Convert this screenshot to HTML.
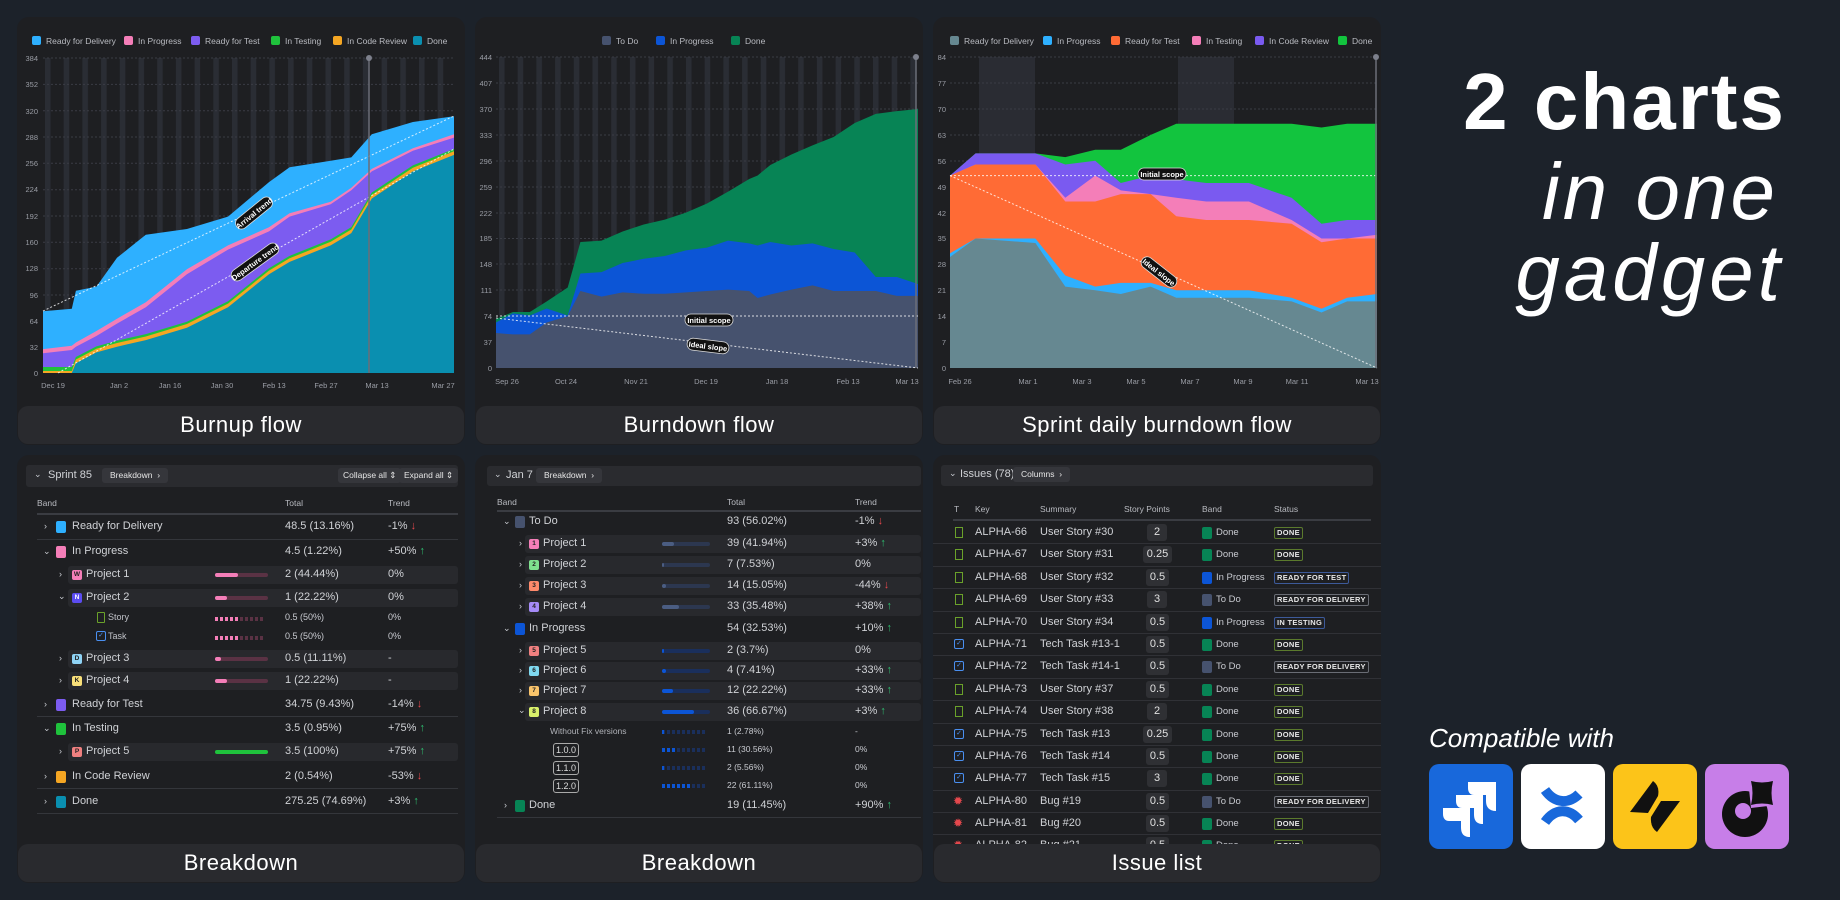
<!DOCTYPE html>
<html><head><meta charset="utf-8"><style>
*{margin:0;padding:0;box-sizing:border-box}
body{width:1840px;height:900px;background:#1c222a;font-family:"Liberation Sans",sans-serif;color:#c9cbd1;position:relative;overflow:hidden}
.panel{position:absolute;background:#1e1f22;border-radius:12px}
.cap{position:absolute;background:#292a2e;border-radius:10px;color:#fff;font-size:22px;letter-spacing:.5px;text-align:center;line-height:38px;height:38px}
.a{position:absolute;white-space:nowrap}
.hb{position:absolute;background:#2a2b2f;border-radius:3px}
.btn{position:absolute;background:#35363b;border-radius:3px;color:#e6e6e6;font-size:8.5px;line-height:15px;height:15px;padding:0 8px}
.t{font-size:11px;color:#d0d2d6}
.h{font-size:8.5px;color:#b9bbc1}
.sw{position:absolute;width:10px;height:12px;border-radius:2px}
.pi{position:absolute;width:10px;height:10px;border-radius:2px;font-size:6.5px;color:#222;text-align:center;line-height:10px;font-weight:bold}
.rb{position:absolute;background:#28292d;border-radius:3px;height:18px}
.ln{position:absolute;height:1px;background:#34363b}
.bar{position:absolute;height:4px;border-radius:2px}
.up{color:#2fbf71}.dn{color:#e5484d}
.chev{position:absolute;font-size:9px;color:#c9cbd1}
.sp{position:absolute;background:#2f3034;border-radius:3px;font-size:11px;color:#e0e0e0;text-align:center;height:17px;line-height:17px}
.st{position:absolute;font-size:7.5px;font-weight:bold;color:#e8e8e8;border:1px solid #6a6d75;border-radius:2px;padding:0 2px;height:12px;line-height:10px;letter-spacing:.3px}
.dot{position:absolute;height:4px;width:50px}
</style></head><body>

<div class="panel" style="left:17px;top:17px;width:448px;height:428px"></div>
<div class="panel" style="left:475px;top:17px;width:448px;height:428px"></div>
<div class="panel" style="left:933px;top:17px;width:448px;height:428px"></div>
<div class="panel" style="left:17px;top:455px;width:448px;height:428px"></div>
<div class="panel" style="left:475px;top:455px;width:448px;height:428px"></div>
<div class="panel" style="left:933px;top:455px;width:448px;height:428px"></div>

<svg width="1840" height="900" style="position:absolute;left:0;top:0" font-family="Liberation Sans, sans-serif">
<defs>
<pattern id="st1" x="45" y="0" width="18.7" height="10" patternUnits="userSpaceOnUse"><rect width="5.5" height="10" fill="#2a2d34"/></pattern>
<pattern id="st2" x="499" y="0" width="18.7" height="10" patternUnits="userSpaceOnUse"><rect width="5.5" height="10" fill="#2a2d34"/></pattern>
</defs>
<g font-size="8.5" fill="#b9bbc1">
<rect x="32" y="36" width="9" height="9" rx="2" fill="#2eb0ff"/><text x="46" y="44">Ready for Delivery</text>
<rect x="124" y="36" width="9" height="9" rx="2" fill="#f47eb8"/><text x="138" y="44">In Progress</text>
<rect x="191" y="36" width="9" height="9" rx="2" fill="#7c5cf0"/><text x="205" y="44">Ready for Test</text>
<rect x="271" y="36" width="9" height="9" rx="2" fill="#1fc23c"/><text x="285" y="44">In Testing</text>
<rect x="333" y="36" width="9" height="9" rx="2" fill="#f5a623"/><text x="347" y="44">In Code Review</text>
<rect x="413" y="36" width="9" height="9" rx="2" fill="#0a8fb0"/><text x="427" y="44">Done</text>

<rect x="602" y="36" width="9" height="9" rx="2" fill="#46526e"/><text x="616" y="44">To Do</text>
<rect x="656" y="36" width="9" height="9" rx="2" fill="#0c55d6"/><text x="670" y="44">In Progress</text>
<rect x="731" y="36" width="9" height="9" rx="2" fill="#078455"/><text x="745" y="44">Done</text>

<rect x="950" y="36" width="9" height="9" rx="2" fill="#668891"/><text x="964" y="44">Ready for Delivery</text>
<rect x="1043" y="36" width="9" height="9" rx="2" fill="#2eb0ff"/><text x="1057" y="44">In Progress</text>
<rect x="1111" y="36" width="9" height="9" rx="2" fill="#ff6b35"/><text x="1125" y="44">Ready for Test</text>
<rect x="1192" y="36" width="9" height="9" rx="2" fill="#f47eb8"/><text x="1206" y="44">In Testing</text>
<rect x="1255" y="36" width="9" height="9" rx="2" fill="#7a5af0"/><text x="1269" y="44">In Code Review</text>
<rect x="1338" y="36" width="9" height="9" rx="2" fill="#12c43e"/><text x="1352" y="44">Done</text>
</g>

<!-- Chart 1 -->
<rect x="43" y="58" width="411" height="315" fill="url(#st1)"/>
<g stroke="#3a3c44" stroke-dasharray="2 2" stroke-width="1">
<line x1="43" x2="454" y1="58" y2="58"/><line x1="43" x2="454" y1="84.4" y2="84.4"/><line x1="43" x2="454" y1="110.7" y2="110.7"/><line x1="43" x2="454" y1="137" y2="137"/><line x1="43" x2="454" y1="163.3" y2="163.3"/><line x1="43" x2="454" y1="189.7" y2="189.7"/><line x1="43" x2="454" y1="216" y2="216"/><line x1="43" x2="454" y1="242.3" y2="242.3"/><line x1="43" x2="454" y1="268.7" y2="268.7"/><line x1="43" x2="454" y1="295" y2="295"/><line x1="43" x2="454" y1="321.3" y2="321.3"/><line x1="43" x2="454" y1="347.6" y2="347.6"/>
</g>
<polygon fill="#2eb0ff" points="43,311.3 71.8,308.8 75.9,290.7 96.4,286.6 117,257.8 145.8,234.7 186.9,229 228,216.6 269,182.1 289.6,167.3 330.7,160.7 351.3,157.4 371.8,134.3 412.9,122 454,116.2 454,373 43,373"/>
<polygon fill="#f47eb8" points="43,349.1 71.8,345.8 75.9,342.5 96.4,331 117,318.7 145.8,302.2 186.9,269.3 228,245.4 269,227.3 289.6,213.3 330.7,201.8 351.3,187.8 371.8,168.9 412.9,148.3 454,134.3 454,373 43,373"/>
<polygon fill="#7c5cf0" points="43,353.2 71.8,350 75.9,346.7 96.4,336 117,323.6 145.8,307.2 186.9,274.2 228,249.6 269,231.4 289.6,216.6 330.7,204.3 351.3,190.3 371.8,171.4 412.9,150.8 454,137.6 454,373 43,373"/>
<polygon fill="#1fc23c" points="43,367 71.8,367 75.9,357 96.4,346.4 117,340.7 145.8,334.1 186.9,321.7 228,301.2 269,268.2 289.6,255.9 330.7,239.4 351.3,227.1 371.8,192.5 412.9,165.4 454,148.9 454,373 43,373"/>
<polygon fill="#f5a623" points="43,371 71.8,371 75.9,359.5 96.4,348.8 117,343 145.8,336.5 186.9,324 228,303.6 269,270.6 289.6,258.3 330.7,241.8 351.3,229.5 371.8,194.9 412.9,167.8 454,151.3 454,373 43,373"/>
<polygon fill="#0a8fb0" points="43,373 71.8,373 75.9,363.1 96.4,352.4 117,346.7 145.8,340.1 186.9,327.7 228,307.2 269,274.2 289.6,261.9 330.7,245.4 351.3,233.1 371.8,198.5 412.9,171.4 454,154.9 454,373 43,373"/>
<line x1="43" y1="311" x2="454" y2="116" stroke="#fff" stroke-dasharray="2 2" opacity=".8"/>
<line x1="58" y1="373" x2="454" y2="149" stroke="#fff" stroke-dasharray="2 2" opacity=".8"/>
<line x1="369" y1="58" x2="369" y2="373" stroke="#6b6e78" stroke-width="1.5"/><circle cx="369" cy="58" r="3" fill="#7d808c"/>
<g transform="translate(254,213) rotate(-39)"><rect x="-22" y="-6" width="44" height="12" rx="6" fill="#111" stroke="#ddd" stroke-width=".8"/><text x="0" y="3" font-size="7.5" fill="#fff" text-anchor="middle" font-weight="bold">Arrival trend</text></g>
<g transform="translate(255,262) rotate(-36)"><rect x="-28" y="-6" width="56" height="12" rx="6" fill="#111" stroke="#ddd" stroke-width=".8"/><text x="0" y="3" font-size="7.5" fill="#fff" text-anchor="middle" font-weight="bold">Departure trend</text></g>
<g font-size="7.5" fill="#9a9da5" text-anchor="end">
<text x="38" y="376">0</text><text x="38" y="350">32</text><text x="38" y="324">64</text><text x="38" y="298">96</text><text x="38" y="271">128</text><text x="38" y="245">160</text><text x="38" y="219">192</text><text x="38" y="192">224</text><text x="38" y="166">256</text><text x="38" y="140">288</text><text x="38" y="114">320</text><text x="38" y="87">352</text><text x="38" y="61">384</text>
</g>
<g font-size="7.5" fill="#9a9da5" text-anchor="middle">
<text x="53" y="388">Dec 19</text><text x="119" y="388">Jan 2</text><text x="170" y="388">Jan 16</text><text x="222" y="388">Jan 30</text><text x="274" y="388">Feb 13</text><text x="326" y="388">Feb 27</text><text x="377" y="388">Mar 13</text><text x="443" y="388">Mar 27</text>
</g>

<!-- Chart 2 -->
<rect x="496" y="57" width="422" height="311" fill="url(#st2)"/>
<g stroke="#3a3c44" stroke-dasharray="2 2">
<line x1="496" x2="918" y1="57" y2="57"/><line x1="496" x2="918" y1="83" y2="83"/><line x1="496" x2="918" y1="109" y2="109"/><line x1="496" x2="918" y1="135" y2="135"/><line x1="496" x2="918" y1="161" y2="161"/><line x1="496" x2="918" y1="187" y2="187"/><line x1="496" x2="918" y1="213" y2="213"/><line x1="496" x2="918" y1="238.5" y2="238.5"/><line x1="496" x2="918" y1="264" y2="264"/><line x1="496" x2="918" y1="290" y2="290"/><line x1="496" x2="918" y1="316" y2="316"/><line x1="496" x2="918" y1="342" y2="342"/>
</g>
<polygon fill="#078455" points="496,319 512.9,312 529.8,312 546.6,301.5 567.7,287.5 580.4,242 601.5,240.6 622.6,231.5 643.7,224.5 664.8,219.6 685.9,212.6 707,203.5 728.1,191.6 749.2,179 757.6,175.5 770.3,165 791.4,154.5 812.5,145.4 833.6,137 854.7,123 875.8,113.9 896.9,111.1 918,109 918,368 496,368"/>
<polygon fill="#0c55d6" points="496,322.5 512.9,313.4 529.8,315.5 546.6,308.5 567.7,315.5 580.4,273.5 601.5,272.1 622.6,263 643.7,258.8 664.8,256 685.9,250.4 707,247.6 728.1,240.6 749.2,243.4 757.6,245.5 770.3,242 791.4,245.5 812.5,243.4 833.6,249 854.7,252.5 875.8,277 896.9,277 918,284 918,368 496,368"/>
<polygon fill="#46526e" points="496,333 512.9,334.4 529.8,334.4 546.6,322.5 567.7,316.2 580.4,291 601.5,296.6 622.6,292.4 643.7,293.8 664.8,293.8 685.9,292.4 707,291 728.1,289.6 749.2,291 757.6,298 770.3,294.5 791.4,289.6 812.5,285.4 833.6,291 854.7,291 875.8,291 896.9,295.9 918,295.9 918,368 496,368"/>
<line x1="496" y1="316" x2="918" y2="316" stroke="#fff" stroke-dasharray="2 2" opacity=".8"/>
<line x1="496" y1="318" x2="918" y2="368" stroke="#fff" stroke-dasharray="2 2" opacity=".8"/>
<line x1="916" y1="57" x2="916" y2="368" stroke="#6b6e78" stroke-width="1.5"/><circle cx="916" cy="57" r="3" fill="#7d808c"/>
<g transform="translate(709,320)"><rect x="-24" y="-6" width="48" height="12" rx="6" fill="#111" stroke="#ddd" stroke-width=".8"/><text x="0" y="3" font-size="7.5" fill="#fff" text-anchor="middle" font-weight="bold">Initial scope</text></g>
<g transform="translate(708,346) rotate(7)"><rect x="-21" y="-6" width="42" height="12" rx="6" fill="#111" stroke="#ddd" stroke-width=".8"/><text x="0" y="3" font-size="7.5" fill="#fff" text-anchor="middle" font-weight="bold">Ideal slope</text></g>
<g font-size="7.5" fill="#9a9da5" text-anchor="end">
<text x="492" y="371">0</text><text x="492" y="345">37</text><text x="492" y="319">74</text><text x="492" y="293">111</text><text x="492" y="267">148</text><text x="492" y="241">185</text><text x="492" y="216">222</text><text x="492" y="190">259</text><text x="492" y="164">296</text><text x="492" y="138">333</text><text x="492" y="112">370</text><text x="492" y="86">407</text><text x="492" y="60">444</text>
</g>
<g font-size="7.5" fill="#9a9da5" text-anchor="middle">
<text x="507" y="384">Sep 26</text><text x="566" y="384">Oct 24</text><text x="636" y="384">Nov 21</text><text x="706" y="384">Dec 19</text><text x="777" y="384">Jan 18</text><text x="848" y="384">Feb 13</text><text x="907" y="384">Mar 13</text>
</g>

<!-- Chart 3 -->
<rect x="979" y="57" width="56" height="311" fill="#2a2c33"/>
<rect x="1178" y="57" width="56" height="311" fill="#2a2c33"/>
<g stroke="#3a3c44" stroke-dasharray="2 2">
<line x1="950" x2="1377" y1="57" y2="57"/><line x1="950" x2="1377" y1="83" y2="83"/><line x1="950" x2="1377" y1="109" y2="109"/><line x1="950" x2="1377" y1="135" y2="135"/><line x1="950" x2="1377" y1="161" y2="161"/><line x1="950" x2="1377" y1="187" y2="187"/><line x1="950" x2="1377" y1="213" y2="213"/><line x1="950" x2="1377" y1="238" y2="238"/><line x1="950" x2="1377" y1="264" y2="264"/><line x1="950" x2="1377" y1="290" y2="290"/><line x1="950" x2="1377" y1="316" y2="316"/><line x1="950" x2="1377" y1="342" y2="342"/>
</g>
<polygon fill="#12c43e" points="950,175.6 975.6,153.4 1035.4,153.4 1065.3,157.1 1095.2,149.7 1120.8,149.7 1150.7,134.9 1176.3,123.8 1206.2,123.8 1248.9,123.8 1291.6,123.8 1321.5,127.5 1347.1,123.8 1377,123.8 1377,368 950,368"/>
<polygon fill="#7a5af0" points="950,175.6 975.6,153.4 1035.4,153.4 1065.3,164.5 1095.2,160.8 1120.8,183 1150.7,175.6 1176.3,179.3 1206.2,183 1248.9,183 1291.6,197.8 1321.5,223.7 1347.1,220 1377,220 1377,368 950,368"/>
<polygon fill="#f47eb8" points="950,175.6 975.6,164.5 1035.4,164.5 1065.3,197.8 1095.2,175.6 1120.8,190.4 1150.7,194.1 1176.3,197.8 1206.2,201.5 1248.9,201.5 1291.6,220 1321.5,238.5 1347.1,238.5 1377,234.8 1377,368 950,368"/>
<polygon fill="#ff6b35" points="950,175.6 975.6,164.5 1035.4,164.5 1065.3,201.5 1095.2,201.5 1120.8,194.1 1150.7,194.1 1176.3,216.3 1206.2,220 1248.9,220 1291.6,223.7 1321.5,242.2 1347.1,238.5 1377,238.5 1377,368 950,368"/>
<polygon fill="#2eb0ff" points="950,253.3 975.6,238.5 1035.4,238.5 1065.3,275.5 1095.2,286.6 1120.8,282.9 1150.7,282.9 1176.3,290.3 1206.2,290.3 1248.9,290.3 1291.6,297.7 1321.5,308.8 1347.1,297.7 1377,294 1377,368 950,368"/>
<polygon fill="#668891" points="950,257 975.6,238.5 1035.4,243 1065.3,286.6 1095.2,290.3 1120.8,294 1150.7,286.6 1176.3,297.7 1206.2,297.7 1248.9,297.7 1291.6,301.4 1321.5,312.5 1347.1,301.4 1377,301.4 1377,368 950,368"/>
<line x1="950" y1="175.6" x2="1377" y2="175.6" stroke="#fff" stroke-dasharray="2 2" opacity=".8"/>
<line x1="950" y1="175.6" x2="1377" y2="368" stroke="#fff" stroke-dasharray="2 2" opacity=".8"/>
<line x1="1376" y1="57" x2="1376" y2="368" stroke="#6b6e78" stroke-width="1.5"/><circle cx="1376" cy="57" r="3" fill="#7d808c"/>
<g transform="translate(1162,174)"><rect x="-24" y="-6" width="48" height="12" rx="6" fill="#111" stroke="#ddd" stroke-width=".8"/><text x="0" y="3" font-size="7.5" fill="#fff" text-anchor="middle" font-weight="bold">Initial scope</text></g>
<g transform="translate(1159,272) rotate(38)"><rect x="-21" y="-6" width="42" height="12" rx="6" fill="#111" stroke="#ddd" stroke-width=".8"/><text x="0" y="3" font-size="7.5" fill="#fff" text-anchor="middle" font-weight="bold">Ideal slope</text></g>
<g font-size="7.5" fill="#9a9da5" text-anchor="end">
<text x="946" y="371">0</text><text x="946" y="345">7</text><text x="946" y="319">14</text><text x="946" y="293">21</text><text x="946" y="267">28</text><text x="946" y="241">35</text><text x="946" y="216">42</text><text x="946" y="190">49</text><text x="946" y="164">56</text><text x="946" y="138">63</text><text x="946" y="112">70</text><text x="946" y="86">77</text><text x="946" y="60">84</text>
</g>
<g font-size="7.5" fill="#9a9da5" text-anchor="middle">
<text x="960" y="384">Feb 26</text><text x="1028" y="384">Mar 1</text><text x="1082" y="384">Mar 3</text><text x="1136" y="384">Mar 5</text><text x="1190" y="384">Mar 7</text><text x="1243" y="384">Mar 9</text><text x="1297" y="384">Mar 11</text><text x="1367" y="384">Mar 13</text>
</g>
</svg>

<div class="cap" style="left:18px;top:406px;width:446px">Burnup flow</div>
<div class="cap" style="left:476px;top:406px;width:446px">Burndown flow</div>
<div class="cap" style="left:934px;top:406px;width:446px">Sprint daily burndown flow</div>

<!-- Breakdown 1 -->
<div class="hb" style="left:26px;top:465px;width:432px;height:22px"></div>
<div class="a" style="left:34px;top:469px;font-size:9px">⌄</div>
<div class="a" style="left:48px;top:469px;font-size:11px;color:#d0d2d6">Sprint 85</div>
<div class="btn" style="left:102px;top:468px">Breakdown &nbsp;›</div>
<div class="btn" style="left:338px;top:468px;padding:0 5px">Collapse all ⇕</div>
<div class="btn" style="left:399px;top:468px;padding:0 5px">Expand all ⇕</div>
<div class="a h" style="left:37px;top:498px">Band</div><div class="a h" style="left:285px;top:498px">Total</div><div class="a h" style="left:388px;top:498px">Trend</div>
<div class="ln" style="left:37px;top:513px;width:421px;background:#3a3c42;height:2px"></div>

<div class="rb" style="left:68px;top:566px;width:390px"></div>
<div class="rb" style="left:68px;top:589px;width:390px"></div>
<div class="rb" style="left:68px;top:650px;width:390px"></div>
<div class="rb" style="left:68px;top:672px;width:390px"></div>
<div class="rb" style="left:68px;top:743px;width:390px"></div>

<div class="chev" style="left:44px;top:521px">›</div><div class="sw" style="left:56px;top:521px;background:#2eb0ff"></div><div class="a t" style="left:72px;top:520px">Ready for Delivery</div><div class="a t" style="left:285px;top:520px">48.5 (13.16%)</div><div class="a t" style="left:388px;top:520px">-1% <span class="dn">↓</span></div>
<div class="ln" style="left:37px;top:539px;width:421px"></div>
<div class="chev" style="left:43px;top:546px">⌄</div><div class="sw" style="left:56px;top:546px;background:#f47eb8"></div><div class="a t" style="left:72px;top:545px">In Progress</div><div class="a t" style="left:285px;top:545px">4.5 (1.22%)</div><div class="a t" style="left:388px;top:545px">+50% <span class="up">↑</span></div>

<div class="chev" style="left:59px;top:569px">›</div><div class="pi" style="left:72px;top:570px;background:#f47eb8">W</div><div class="a t" style="left:86px;top:568px">Project 1</div><div class="bar" style="left:215px;top:573px;width:53px;background:#5a3244"></div><div class="bar" style="left:215px;top:573px;width:23px;background:#f47eb8"></div><div class="a t" style="left:285px;top:568px">2 (44.44%)</div><div class="a t" style="left:388px;top:568px">0%</div>
<div class="chev" style="left:58px;top:591px">⌄</div><div class="pi" style="left:72px;top:593px;background:#5b4cf0;color:#fff">N</div><div class="a t" style="left:86px;top:591px">Project 2</div><div class="bar" style="left:215px;top:596px;width:53px;background:#5a3244"></div><div class="bar" style="left:215px;top:596px;width:12px;background:#f47eb8"></div><div class="a t" style="left:285px;top:591px">1 (22.22%)</div><div class="a t" style="left:388px;top:591px">0%</div>

<div class="a" style="left:97px;top:612px;width:8px;height:11px;border:1.5px solid #6aa12a;border-radius:1px"></div><div class="a" style="left:108px;top:612px;font-size:9px;color:#c0c2c8">Story</div><div class="dot" style="left:215px;top:617px;background:repeating-linear-gradient(90deg,#f47eb8 0 3px,transparent 3px 5px);width:25px"></div><div class="dot" style="left:240px;top:617px;background:repeating-linear-gradient(90deg,#5a3244 0 3px,transparent 3px 5px);width:25px"></div><div class="a" style="left:285px;top:612px;font-size:9px">0.5 (50%)</div><div class="a" style="left:388px;top:612px;font-size:9px">0%</div>
<div class="a" style="left:96px;top:631px;width:10px;height:10px;border:1.5px solid #4a8ff0;border-radius:2px;font-size:7px;color:#4a8ff0;line-height:7px;text-align:center">✓</div><div class="a" style="left:108px;top:631px;font-size:9px;color:#c0c2c8">Task</div><div class="dot" style="left:215px;top:636px;background:repeating-linear-gradient(90deg,#f47eb8 0 3px,transparent 3px 5px);width:25px"></div><div class="dot" style="left:240px;top:636px;background:repeating-linear-gradient(90deg,#5a3244 0 3px,transparent 3px 5px);width:25px"></div><div class="a" style="left:285px;top:631px;font-size:9px">0.5 (50%)</div><div class="a" style="left:388px;top:631px;font-size:9px">0%</div>

<div class="chev" style="left:59px;top:653px">›</div><div class="pi" style="left:72px;top:654px;background:#8fd3f5">D</div><div class="a t" style="left:86px;top:652px">Project 3</div><div class="bar" style="left:215px;top:657px;width:53px;background:#5a3244"></div><div class="bar" style="left:215px;top:657px;width:6px;background:#f47eb8"></div><div class="a t" style="left:285px;top:652px">0.5 (11.11%)</div><div class="a t" style="left:388px;top:652px">-</div>
<div class="chev" style="left:59px;top:675px">›</div><div class="pi" style="left:72px;top:676px;background:#f9e07a">K</div><div class="a t" style="left:86px;top:674px">Project 4</div><div class="bar" style="left:215px;top:679px;width:53px;background:#5a3244"></div><div class="bar" style="left:215px;top:679px;width:12px;background:#f47eb8"></div><div class="a t" style="left:285px;top:674px">1 (22.22%)</div><div class="a t" style="left:388px;top:674px">-</div>

<div class="chev" style="left:44px;top:699px">›</div><div class="sw" style="left:56px;top:699px;background:#7c5cf0"></div><div class="a t" style="left:72px;top:698px">Ready for Test</div><div class="a t" style="left:285px;top:698px">34.75 (9.43%)</div><div class="a t" style="left:388px;top:698px">-14% <span class="dn">↓</span></div>
<div class="ln" style="left:37px;top:716px;width:421px"></div>
<div class="chev" style="left:43px;top:723px">⌄</div><div class="sw" style="left:56px;top:723px;background:#1fc23c"></div><div class="a t" style="left:72px;top:722px">In Testing</div><div class="a t" style="left:285px;top:722px">3.5 (0.95%)</div><div class="a t" style="left:388px;top:722px">+75% <span class="up">↑</span></div>
<div class="chev" style="left:59px;top:746px">›</div><div class="pi" style="left:72px;top:747px;background:#f08080">P</div><div class="a t" style="left:86px;top:745px">Project 5</div><div class="bar" style="left:215px;top:750px;width:53px;background:#1fc23c"></div><div class="a t" style="left:285px;top:745px">3.5 (100%)</div><div class="a t" style="left:388px;top:745px">+75% <span class="up">↑</span></div>
<div class="chev" style="left:44px;top:771px">›</div><div class="sw" style="left:56px;top:771px;background:#f5a623"></div><div class="a t" style="left:72px;top:770px">In Code Review</div><div class="a t" style="left:285px;top:770px">2 (0.54%)</div><div class="a t" style="left:388px;top:770px">-53% <span class="dn">↓</span></div>
<div class="ln" style="left:37px;top:788px;width:421px"></div>
<div class="chev" style="left:44px;top:796px">›</div><div class="sw" style="left:56px;top:796px;background:#0a8fb0"></div><div class="a t" style="left:72px;top:795px">Done</div><div class="a t" style="left:285px;top:795px">275.25 (74.69%)</div><div class="a t" style="left:388px;top:795px">+3% <span class="up">↑</span></div>
<div class="ln" style="left:37px;top:813px;width:421px"></div>

<!-- Breakdown 2 -->
<div class="hb" style="left:487px;top:466px;width:434px;height:20px"></div>
<div class="a" style="left:494px;top:469px;font-size:9px">⌄</div>
<div class="a" style="left:506px;top:469px;font-size:11px;color:#d0d2d6">Jan 7</div>
<div class="btn" style="left:536px;top:468px">Breakdown &nbsp;›</div>
<div class="a h" style="left:497px;top:497px">Band</div><div class="a h" style="left:727px;top:497px">Total</div><div class="a h" style="left:855px;top:497px">Trend</div>
<div class="ln" style="left:497px;top:510px;width:424px;background:#3a3c42;height:2px"></div>

<div class="rb" style="left:525px;top:535px;width:396px"></div>
<div class="rb" style="left:525px;top:556px;width:396px"></div>
<div class="rb" style="left:525px;top:577px;width:396px"></div>
<div class="rb" style="left:525px;top:598px;width:396px"></div>
<div class="rb" style="left:525px;top:642px;width:396px"></div>
<div class="rb" style="left:525px;top:662px;width:396px"></div>
<div class="rb" style="left:525px;top:682px;width:396px"></div>
<div class="rb" style="left:525px;top:703px;width:396px"></div>

<div class="chev" style="left:503px;top:516px">⌄</div><div class="sw" style="left:515px;top:516px;background:#46526e"></div><div class="a t" style="left:529px;top:515px">To Do</div><div class="a t" style="left:727px;top:515px">93 (56.02%)</div><div class="a t" style="left:855px;top:515px">-1% <span class="dn">↓</span></div>

<div class="chev" style="left:519px;top:538px">›</div><div class="pi" style="left:529px;top:539px;background:#f47eb8">1</div><div class="a t" style="left:543px;top:537px">Project 1</div><div class="bar" style="left:662px;top:542px;width:48px;background:#2c3750"></div><div class="bar" style="left:662px;top:542px;width:12px;background:#4b5d82"></div><div class="a t" style="left:727px;top:537px">39 (41.94%)</div><div class="a t" style="left:855px;top:537px">+3% <span class="up">↑</span></div>
<div class="chev" style="left:519px;top:559px">›</div><div class="pi" style="left:529px;top:560px;background:#7ee08e">2</div><div class="a t" style="left:543px;top:558px">Project 2</div><div class="bar" style="left:662px;top:563px;width:48px;background:#2c3750"></div><div class="bar" style="left:662px;top:563px;width:2px;background:#4b5d82"></div><div class="a t" style="left:727px;top:558px">7 (7.53%)</div><div class="a t" style="left:855px;top:558px">0%</div>
<div class="chev" style="left:519px;top:580px">›</div><div class="pi" style="left:529px;top:581px;background:#ff8a6b">3</div><div class="a t" style="left:543px;top:579px">Project 3</div><div class="bar" style="left:662px;top:584px;width:48px;background:#2c3750"></div><div class="bar" style="left:662px;top:584px;width:4px;background:#4b5d82"></div><div class="a t" style="left:727px;top:579px">14 (15.05%)</div><div class="a t" style="left:855px;top:579px">-44% <span class="dn">↓</span></div>
<div class="chev" style="left:519px;top:601px">›</div><div class="pi" style="left:529px;top:602px;background:#a58bf7">4</div><div class="a t" style="left:543px;top:600px">Project 4</div><div class="bar" style="left:662px;top:605px;width:48px;background:#2c3750"></div><div class="bar" style="left:662px;top:605px;width:17px;background:#4b5d82"></div><div class="a t" style="left:727px;top:600px">33 (35.48%)</div><div class="a t" style="left:855px;top:600px">+38% <span class="up">↑</span></div>

<div class="chev" style="left:503px;top:623px">⌄</div><div class="sw" style="left:515px;top:623px;background:#0c55d6"></div><div class="a t" style="left:529px;top:622px">In Progress</div><div class="a t" style="left:727px;top:622px">54 (32.53%)</div><div class="a t" style="left:855px;top:622px">+10% <span class="up">↑</span></div>

<div class="chev" style="left:519px;top:645px">›</div><div class="pi" style="left:529px;top:646px;background:#f08080">5</div><div class="a t" style="left:543px;top:644px">Project 5</div><div class="bar" style="left:662px;top:649px;width:48px;background:#1a2f5c"></div><div class="bar" style="left:662px;top:649px;width:2px;background:#0c55d6"></div><div class="a t" style="left:727px;top:644px">2 (3.7%)</div><div class="a t" style="left:855px;top:644px">0%</div>
<div class="chev" style="left:519px;top:665px">›</div><div class="pi" style="left:529px;top:666px;background:#7fd9f0">6</div><div class="a t" style="left:543px;top:664px">Project 6</div><div class="bar" style="left:662px;top:669px;width:48px;background:#1a2f5c"></div><div class="bar" style="left:662px;top:669px;width:4px;background:#0c55d6"></div><div class="a t" style="left:727px;top:664px">4 (7.41%)</div><div class="a t" style="left:855px;top:664px">+33% <span class="up">↑</span></div>
<div class="chev" style="left:519px;top:685px">›</div><div class="pi" style="left:529px;top:686px;background:#f9c46b">7</div><div class="a t" style="left:543px;top:684px">Project 7</div><div class="bar" style="left:662px;top:689px;width:48px;background:#1a2f5c"></div><div class="bar" style="left:662px;top:689px;width:11px;background:#0c55d6"></div><div class="a t" style="left:727px;top:684px">12 (22.22%)</div><div class="a t" style="left:855px;top:684px">+33% <span class="up">↑</span></div>
<div class="chev" style="left:518px;top:705px">⌄</div><div class="pi" style="left:529px;top:707px;background:#d9f06b">8</div><div class="a t" style="left:543px;top:705px">Project 8</div><div class="bar" style="left:662px;top:710px;width:48px;background:#1a2f5c"></div><div class="bar" style="left:662px;top:710px;width:32px;background:#0c55d6"></div><div class="a t" style="left:727px;top:705px">36 (66.67%)</div><div class="a t" style="left:855px;top:705px">+3% <span class="up">↑</span></div>

<div class="a" style="left:550px;top:726px;font-size:8.5px;color:#b0b2b8">Without Fix versions</div><div class="dot" style="left:662px;top:730px;width:44px;background:repeating-linear-gradient(90deg,#1a2f5c 0 3px,transparent 3px 5px)"></div><div class="dot" style="left:662px;top:730px;width:2px;background:#0c55d6"></div><div class="a" style="left:727px;top:726px;font-size:8.5px">1 (2.78%)</div><div class="a" style="left:855px;top:726px;font-size:8.5px">-</div>
<div class="a" style="left:553px;top:743px;width:26px;height:14px;border:1px solid #aaa;border-radius:3px;font-size:9px;text-align:center;line-height:12px;color:#ddd">1.0.0</div><div class="dot" style="left:662px;top:748px;width:44px;background:repeating-linear-gradient(90deg,#1a2f5c 0 3px,transparent 3px 5px)"></div><div class="dot" style="left:662px;top:748px;width:13px;background:repeating-linear-gradient(90deg,#0c55d6 0 3px,transparent 3px 5px)"></div><div class="a" style="left:727px;top:744px;font-size:8.5px">11 (30.56%)</div><div class="a" style="left:855px;top:744px;font-size:8.5px">0%</div>
<div class="a" style="left:553px;top:761px;width:26px;height:14px;border:1px solid #aaa;border-radius:3px;font-size:9px;text-align:center;line-height:12px;color:#ddd">1.1.0</div><div class="dot" style="left:662px;top:766px;width:44px;background:repeating-linear-gradient(90deg,#1a2f5c 0 3px,transparent 3px 5px)"></div><div class="dot" style="left:662px;top:766px;width:2px;background:#0c55d6"></div><div class="a" style="left:727px;top:762px;font-size:8.5px">2 (5.56%)</div><div class="a" style="left:855px;top:762px;font-size:8.5px">0%</div>
<div class="a" style="left:553px;top:779px;width:26px;height:14px;border:1px solid #aaa;border-radius:3px;font-size:9px;text-align:center;line-height:12px;color:#ddd">1.2.0</div><div class="dot" style="left:662px;top:784px;width:44px;background:repeating-linear-gradient(90deg,#1a2f5c 0 3px,transparent 3px 5px)"></div><div class="dot" style="left:662px;top:784px;width:28px;background:repeating-linear-gradient(90deg,#0c55d6 0 3px,transparent 3px 5px)"></div><div class="a" style="left:727px;top:780px;font-size:8.5px">22 (61.11%)</div><div class="a" style="left:855px;top:780px;font-size:8.5px">0%</div>

<div class="chev" style="left:504px;top:800px">›</div><div class="sw" style="left:515px;top:800px;background:#078455"></div><div class="a t" style="left:529px;top:799px">Done</div><div class="a t" style="left:727px;top:799px">19 (11.45%)</div><div class="a t" style="left:855px;top:799px">+90% <span class="up">↑</span></div>
<div class="ln" style="left:497px;top:817px;width:424px"></div>

<!-- Issue list -->
<div style="position:absolute;left:933px;top:455px;width:448px;height:390px;overflow:hidden">
<div class="hb" style="left:8px;top:10px;width:432px;height:21px"></div>
<div class="a" style="left:16px;top:13px;font-size:9px">⌄</div>
<div class="a" style="left:27px;top:13px;font-size:11px;color:#d0d2d6">Issues (78)</div>
<div class="btn" style="left:80px;top:12px">Columns &nbsp;›</div>
<div class="a h" style="left:21px;top:49px">T</div><div class="a h" style="left:42px;top:49px">Key</div><div class="a h" style="left:107px;top:49px">Summary</div><div class="a h" style="left:191px;top:49px">Story Points</div><div class="a h" style="left:269px;top:49px">Band</div><div class="a h" style="left:341px;top:49px">Status</div>
<div class="ln" style="left:20px;top:64px;width:418px;background:#3a3c42;height:2px"></div>
</div>
<div style="position:absolute;left:933px;top:455px;width:448px;height:389px;overflow:hidden">
<div style="position:absolute;left:0;top:67px;width:448px">
<div style="position:relative;height:22.4px;border-bottom:1px solid #303136"><span class="a" style="left:22px;top:5px;width:8px;height:11px;border:1.5px solid #6aa12a"></span><span class="a t" style="left:42px;top:4px">ALPHA-66</span><span class="a t" style="left:107px;top:4px">User Story #30</span><span class="sp" style="left:214px;top:2px;width:20px">2</span><span class="sw" style="left:269px;top:5px;background:#078455"></span><span class="a" style="left:283px;top:5px;font-size:9.5px">Done</span><span class="st" style="left:341px;top:5px;border-color:#5b7a2d">DONE</span></div>
<div style="position:relative;height:22.4px;border-bottom:1px solid #303136"><span class="a" style="left:22px;top:5px;width:8px;height:11px;border:1.5px solid #6aa12a"></span><span class="a t" style="left:42px;top:4px">ALPHA-67</span><span class="a t" style="left:107px;top:4px">User Story #31</span><span class="sp" style="left:210px;top:2px;width:29px">0.25</span><span class="sw" style="left:269px;top:5px;background:#078455"></span><span class="a" style="left:283px;top:5px;font-size:9.5px">Done</span><span class="st" style="left:341px;top:5px;border-color:#5b7a2d">DONE</span></div>
<div style="position:relative;height:22.4px;border-bottom:1px solid #303136"><span class="a" style="left:22px;top:5px;width:8px;height:11px;border:1.5px solid #6aa12a"></span><span class="a t" style="left:42px;top:4px">ALPHA-68</span><span class="a t" style="left:107px;top:4px">User Story #32</span><span class="sp" style="left:213px;top:2px;width:23px">0.5</span><span class="sw" style="left:269px;top:5px;background:#0c55d6"></span><span class="a" style="left:283px;top:5px;font-size:9.5px">In Progress</span><span class="st" style="left:341px;top:5px;border-color:#3d5a9a">READY FOR TEST</span></div>
<div style="position:relative;height:22.4px;border-bottom:1px solid #303136"><span class="a" style="left:22px;top:5px;width:8px;height:11px;border:1.5px solid #6aa12a"></span><span class="a t" style="left:42px;top:4px">ALPHA-69</span><span class="a t" style="left:107px;top:4px">User Story #33</span><span class="sp" style="left:214px;top:2px;width:20px">3</span><span class="sw" style="left:269px;top:5px;background:#46526e"></span><span class="a" style="left:283px;top:5px;font-size:9.5px">To Do</span><span class="st" style="left:341px;top:5px">READY FOR DELIVERY</span></div>
<div style="position:relative;height:22.4px;border-bottom:1px solid #303136"><span class="a" style="left:22px;top:5px;width:8px;height:11px;border:1.5px solid #6aa12a"></span><span class="a t" style="left:42px;top:4px">ALPHA-70</span><span class="a t" style="left:107px;top:4px">User Story #34</span><span class="sp" style="left:213px;top:2px;width:23px">0.5</span><span class="sw" style="left:269px;top:5px;background:#0c55d6"></span><span class="a" style="left:283px;top:5px;font-size:9.5px">In Progress</span><span class="st" style="left:341px;top:5px;border-color:#3d5a9a">IN TESTING</span></div>
<div style="position:relative;height:22.4px;border-bottom:1px solid #303136"><span class="a" style="left:21px;top:5px;width:10px;height:10px;border:1.5px solid #4a8ff0;border-radius:2px;font-size:7px;color:#4a8ff0;line-height:7px;text-align:center">✓</span><span class="a t" style="left:42px;top:4px">ALPHA-71</span><span class="a t" style="left:107px;top:4px">Tech Task #13-1</span><span class="sp" style="left:213px;top:2px;width:23px">0.5</span><span class="sw" style="left:269px;top:5px;background:#078455"></span><span class="a" style="left:283px;top:5px;font-size:9.5px">Done</span><span class="st" style="left:341px;top:5px;border-color:#5b7a2d">DONE</span></div>
<div style="position:relative;height:22.4px;border-bottom:1px solid #303136"><span class="a" style="left:21px;top:5px;width:10px;height:10px;border:1.5px solid #4a8ff0;border-radius:2px;font-size:7px;color:#4a8ff0;line-height:7px;text-align:center">✓</span><span class="a t" style="left:42px;top:4px">ALPHA-72</span><span class="a t" style="left:107px;top:4px">Tech Task #14-1</span><span class="sp" style="left:213px;top:2px;width:23px">0.5</span><span class="sw" style="left:269px;top:5px;background:#46526e"></span><span class="a" style="left:283px;top:5px;font-size:9.5px">To Do</span><span class="st" style="left:341px;top:5px">READY FOR DELIVERY</span></div>
<div style="position:relative;height:22.4px;border-bottom:1px solid #303136"><span class="a" style="left:22px;top:5px;width:8px;height:11px;border:1.5px solid #6aa12a"></span><span class="a t" style="left:42px;top:4px">ALPHA-73</span><span class="a t" style="left:107px;top:4px">User Story #37</span><span class="sp" style="left:213px;top:2px;width:23px">0.5</span><span class="sw" style="left:269px;top:5px;background:#078455"></span><span class="a" style="left:283px;top:5px;font-size:9.5px">Done</span><span class="st" style="left:341px;top:5px;border-color:#5b7a2d">DONE</span></div>
<div style="position:relative;height:22.4px;border-bottom:1px solid #303136"><span class="a" style="left:22px;top:5px;width:8px;height:11px;border:1.5px solid #6aa12a"></span><span class="a t" style="left:42px;top:4px">ALPHA-74</span><span class="a t" style="left:107px;top:4px">User Story #38</span><span class="sp" style="left:214px;top:2px;width:20px">2</span><span class="sw" style="left:269px;top:5px;background:#078455"></span><span class="a" style="left:283px;top:5px;font-size:9.5px">Done</span><span class="st" style="left:341px;top:5px;border-color:#5b7a2d">DONE</span></div>
<div style="position:relative;height:22.4px;border-bottom:1px solid #303136"><span class="a" style="left:21px;top:5px;width:10px;height:10px;border:1.5px solid #4a8ff0;border-radius:2px;font-size:7px;color:#4a8ff0;line-height:7px;text-align:center">✓</span><span class="a t" style="left:42px;top:4px">ALPHA-75</span><span class="a t" style="left:107px;top:4px">Tech Task #13</span><span class="sp" style="left:210px;top:2px;width:29px">0.25</span><span class="sw" style="left:269px;top:5px;background:#078455"></span><span class="a" style="left:283px;top:5px;font-size:9.5px">Done</span><span class="st" style="left:341px;top:5px;border-color:#5b7a2d">DONE</span></div>
<div style="position:relative;height:22.4px;border-bottom:1px solid #303136"><span class="a" style="left:21px;top:5px;width:10px;height:10px;border:1.5px solid #4a8ff0;border-radius:2px;font-size:7px;color:#4a8ff0;line-height:7px;text-align:center">✓</span><span class="a t" style="left:42px;top:4px">ALPHA-76</span><span class="a t" style="left:107px;top:4px">Tech Task #14</span><span class="sp" style="left:213px;top:2px;width:23px">0.5</span><span class="sw" style="left:269px;top:5px;background:#078455"></span><span class="a" style="left:283px;top:5px;font-size:9.5px">Done</span><span class="st" style="left:341px;top:5px;border-color:#5b7a2d">DONE</span></div>
<div style="position:relative;height:22.4px;border-bottom:1px solid #303136"><span class="a" style="left:21px;top:5px;width:10px;height:10px;border:1.5px solid #4a8ff0;border-radius:2px;font-size:7px;color:#4a8ff0;line-height:7px;text-align:center">✓</span><span class="a t" style="left:42px;top:4px">ALPHA-77</span><span class="a t" style="left:107px;top:4px">Tech Task #15</span><span class="sp" style="left:214px;top:2px;width:20px">3</span><span class="sw" style="left:269px;top:5px;background:#078455"></span><span class="a" style="left:283px;top:5px;font-size:9.5px">Done</span><span class="st" style="left:341px;top:5px;border-color:#5b7a2d">DONE</span></div>
<div style="position:relative;height:22.4px;border-bottom:1px solid #303136"><span class="a" style="left:20px;top:3px;font-size:12px;color:#e5484d">✹</span><span class="a t" style="left:42px;top:4px">ALPHA-80</span><span class="a t" style="left:107px;top:4px">Bug #19</span><span class="sp" style="left:213px;top:2px;width:23px">0.5</span><span class="sw" style="left:269px;top:5px;background:#46526e"></span><span class="a" style="left:283px;top:5px;font-size:9.5px">To Do</span><span class="st" style="left:341px;top:5px">READY FOR DELIVERY</span></div>
<div style="position:relative;height:22.4px;border-bottom:1px solid #303136"><span class="a" style="left:20px;top:3px;font-size:12px;color:#e5484d">✹</span><span class="a t" style="left:42px;top:4px">ALPHA-81</span><span class="a t" style="left:107px;top:4px">Bug #20</span><span class="sp" style="left:213px;top:2px;width:23px">0.5</span><span class="sw" style="left:269px;top:5px;background:#078455"></span><span class="a" style="left:283px;top:5px;font-size:9.5px">Done</span><span class="st" style="left:341px;top:5px;border-color:#5b7a2d">DONE</span></div>
<div style="position:relative;height:22.4px"><span class="a" style="left:20px;top:3px;font-size:12px;color:#e5484d">✹</span><span class="a t" style="left:42px;top:4px">ALPHA-82</span><span class="a t" style="left:107px;top:4px">Bug #21</span><span class="sp" style="left:213px;top:2px;width:23px">0.5</span><span class="sw" style="left:269px;top:5px;background:#078455"></span><span class="a" style="left:283px;top:5px;font-size:9.5px">Done</span><span class="st" style="left:341px;top:5px;border-color:#5b7a2d">DONE</span></div>
</div>
</div>

<div class="cap" style="left:18px;top:844px;width:446px">Breakdown</div>
<div class="cap" style="left:476px;top:844px;width:446px">Breakdown</div>
<div class="cap" style="left:934px;top:844px;width:446px">Issue list</div>

<!-- Right text -->
<div class="a" style="right:54px;top:57px;font-size:80px;font-weight:bold;color:#fff;letter-spacing:2px;line-height:90px">2 charts</div>
<div class="a" style="right:62px;top:147px;font-size:80px;font-style:italic;color:#fff;letter-spacing:3px;line-height:90px">in one</div>
<div class="a" style="right:56px;top:228px;font-size:80px;font-style:italic;color:#fff;letter-spacing:4px;line-height:90px">gadget</div>
<div class="a" style="left:1429px;top:723px;font-size:26px;font-style:italic;color:#fff">Compatible with</div>

<svg class="a" style="left:1429px;top:764px" width="360" height="86">
<rect x="0" y="0" width="84" height="85" rx="10" fill="#1868db"/>
<g fill="#fff">
<path d="M39 18 H67 V47 C60 47 57 43 57 37 V31 H45 C41 31 39 28 39 24 Z"/>
<path d="M27 31 H54 V60 C47 60 45 56 45 50 V44 H33 C29 44 27 41 27 37 Z"/>
<path d="M14 44 H41 V73 C34 73 32 69 32 63 V57 H20 C16 57 14 54 14 50 Z"/>
</g>
<rect x="92" y="0" width="84" height="85" rx="10" fill="#fff"/>
<g fill="none" stroke="#1868db" stroke-width="10">
<path d="M116 26 C126 40 140 40 150 30"/>
<path d="M116 58 C126 44 140 44 150 56"/>
</g>
<rect x="184" y="0" width="84" height="85" rx="10" fill="#fcc419"/>
<g fill="#111">
<path d="M201 48 L224 17 Q231 22 229 32 L219 49 Z"/>
<path d="M251 37 L228 68 Q221 63 222 53 L232 37 Z"/>
</g>
<rect x="276" y="0" width="84" height="85" rx="10" fill="#c77ee8"/>
<circle cx="316" cy="50" r="23" fill="#111"/>
<circle cx="314" cy="47" r="8" fill="#c77ee8"/>
<path d="M320 25 L338 22 L339 42 L322 44 Z" fill="#c77ee8"/>
<path d="M322 17 Q333 20 344 17 Q341 29 344 41 Q333 38 322 41 Q325 29 322 17 Z" fill="#111"/>
</svg>
</body></html>
